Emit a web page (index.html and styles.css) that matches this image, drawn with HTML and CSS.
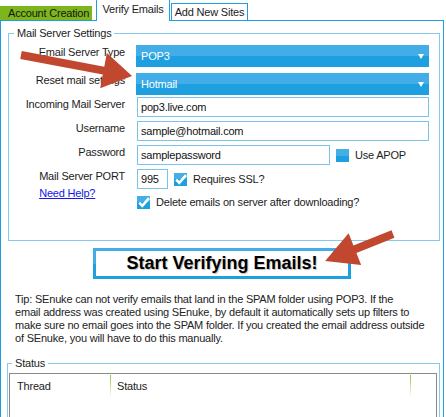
FILE: index.html
```html
<!DOCTYPE html>
<html>
<head>
<meta charset="utf-8">
<link rel="stylesheet" href="styles.css">
</head>
<body>
<div class="tabs">
  <div class="tab tab-green">Account Creation</div>
  <div class="tab tab-active">Verify Emails</div>
  <div class="tab tab-plain">Add New Sites</div>
</div>
<div class="panel">
  <fieldset class="group group-mail">
    <legend>Mail Server Settings</legend>
    <div class="form">
      <div class="lbl lbl-select">Email Server Type</div>
      <div class="select"><span>POP3</span><span class="caret"></span></div>

      <div class="lbl lbl-select">Reset mail settings</div>
      <div class="select"><span>Hotmail</span><span class="caret"></span></div>

      <div class="lbl">Incoming Mail Server</div>
      <div class="field">pop3.live.com</div>

      <div class="lbl">Username</div>
      <div class="field">sample@hotmail.com</div>

      <div class="lbl">Password</div>
      <div class="row">
        <div class="field field-pass">samplepassword</div>
        <span class="check check-off"></span>
        <span class="check-text">Use APOP</span>
      </div>

      <div class="lbl lbl-port">
        <div class="port-stack">
          <div>Mail Server PORT</div>
          <a class="help" href="#">Need Help?</a>
        </div>
      </div>
      <div class="row">
        <div class="field field-port">995</div>
        <span class="check check-on"></span>
        <span class="check-text">Requires SSL?</span>
      </div>

      <div class="row row-delete">
        <span class="check check-on"></span>
        <span class="check-text">Delete emails on server after downloading?</span>
      </div>
    </div>
  </fieldset>

  <div class="btn-wrap">
    <div class="start-btn"><div class="start-inner">Start Verifying Emails!</div></div>
  </div>

  <p class="tip">Tip: SEnuke can not verify emails that land in the SPAM folder using POP3. If the<br>email address was created using SEnuke, by default it automatically sets up filters to<br>make sure no email goes into the SPAM folder. If you created the email address outside<br>of SEnuke, you will have to do this manually.</p>

  <fieldset class="group group-status">
    <legend>Status</legend>
    <div class="listbox">
      <div class="list-head">
        <div class="col col-thread">Thread</div>
        <div class="sep"></div>
        <div class="col col-status">Status</div>
        <div class="sep"></div>
      </div>
    </div>
  </fieldset>
</div>

<svg class="arrows" width="446" height="417" viewBox="0 0 446 417">
  <path fill="#c1472f" transform="translate(21 55) rotate(10.7)" d="M0 -4 H84 V-18 L113 0 L84 18 V4 H0 Z"/>
  <path fill="#c1472f" transform="translate(393 234) rotate(158.3)" d="M0 -4 H41 V-17 L73 0 L41 17 V4 H0 Z"/>
</svg>
</body>
</html>
```

FILE: styles.css
```css
html, body {
  margin: 0;
  padding: 0;
  background: #fff;
  overflow: hidden;
}
body {
  position: relative;
  width: 446px;
  height: 417px;
  font-family: "Liberation Sans", Arial, sans-serif;
  font-size: 11px;
  letter-spacing: -0.2px;
  color: #1c1c1c;
}

/* Tabs */
.tabs {
  display: flex;
  align-items: flex-end;
  height: 20px;
}
.tab {
  box-sizing: border-box;
  white-space: nowrap;
}
.tab-green {
  width: 92px;
  height: 14px;
  line-height: 14px;
  padding-left: 8px;
  background: #7db61c;
  color: #151515;
}
.tab-active {
  position: relative;
  z-index: 1;
  width: 74px;
  height: 22px;
  margin-left: 4px;
  margin-bottom: -1px;
  border: 1px solid #1f9de0;
  border-bottom: none;
  background: #fff;
  line-height: 18px;
  text-align: center;
}
.tab-plain {
  width: 77px;
  height: 17px;
  margin-left: 1px;
  border: 1px solid #1f9de0;
  border-bottom: none;
  background: #fff;
  line-height: 16px;
  text-align: center;
}

/* Panel */
.panel {
  box-sizing: border-box;
  width: 444px;
  height: 397px;
  border: 1px solid #1f9de0;
  border-bottom: none;
  overflow: hidden;
}

.group {
  border: 1px solid #86cbed;
  padding: 0;
  min-width: 0;
}
.group legend {
  padding: 0 3px;
  line-height: 13px;
}
.group-mail {
  margin: 6px 3px 0 7px;
}
.group-mail legend {
  margin-left: 5px;
}

.form {
  display: grid;
  grid-template-columns: 116px 1fr;
  grid-template-rows: 22px 28px 22px 24px 24px 24px 20px;
  column-gap: 11px;
  padding: 5px 10px 31px 0;
}
.lbl {
  align-self: end;
  text-align: right;
  line-height: 13px;
  margin-bottom: 6px;
  white-space: nowrap;
}
.lbl-select {
  margin-bottom: 8px;
}
.lbl-port {
  grid-row: span 2;
  align-self: start;
  margin: 5px 0 0;
}
.port-stack {
  display: inline-block;
  text-align: left;
}
.help {
  display: block;
  margin-top: 4px;
  color: #1515e8;
  text-decoration: underline;
}

.select {
  align-self: end;
  height: 22px;
  display: flex;
  align-items: center;
  justify-content: space-between;
  padding: 0 5px 0 5px;
  background: linear-gradient(#42ade6 50%, #1e9fe0 50%);
  color: #fff;
}
.caret {
  width: 0;
  height: 0;
  border-left: 3.5px solid transparent;
  border-right: 3.5px solid transparent;
  border-top: 5px solid #fff;
  margin-top: 1px;
}

.field {
  box-sizing: border-box;
  align-self: end;
  height: 20px;
  margin-left: 1px;
  border: 1px solid #7cc3ea;
  padding-left: 3px;
  line-height: 18px;
  color: #111;
  background: #fff;
}
.row {
  align-self: end;
  display: flex;
  align-items: center;
}
.row .field {
  flex: none;
}
.field-pass {
  width: 193px;
}
.field-port {
  width: 31px;
}
.row-delete {
  grid-column: 2;
  height: 13px;
  margin-left: 1px;
}
.check {
  flex: none;
  width: 13px;
  height: 13px;
  margin-left: 6px;
  background: linear-gradient(#44aee6 50%, #1e9fe0 50%);
  background-repeat: no-repeat;
}
.row-delete .check {
  margin-left: 0;
}
.check-on {
  background-image:
    url("data:image/svg+xml;utf8,<svg xmlns='http://www.w3.org/2000/svg' width='13' height='13'><path d='M2.2 6.6 L5.3 9.8 L12 2.2' fill='none' stroke='white' stroke-width='2.6'/></svg>"),
    linear-gradient(#44aee6 50%, #1e9fe0 50%);
}
.check-text {
  margin-left: 6px;
  white-space: nowrap;
  line-height: 13px;
}

/* Button */
.btn-wrap {
  display: flex;
  justify-content: center;
  margin-top: 7px;
}
.start-btn {
  width: 258px;
  height: 31px;
  box-sizing: border-box;
  padding: 3px;
  background: linear-gradient(#42ade6 50%, #1e9fe0 50%);
}
.start-inner {
  height: 100%;
  background: #fff;
  display: flex;
  align-items: center;
  justify-content: center;
  font-size: 18px;
  font-weight: bold;
  letter-spacing: 0;
  color: #000;
  text-shadow: 1px 1px 1px rgba(0, 0, 0, 0.25);
}

/* Tip */
.tip {
  margin: 14px 0 0;
  padding-left: 14px;
  line-height: 13px;
  color: #222;
  white-space: nowrap;
}

/* Status */
.group-status {
  margin: 12px 3px 0 6px;
}
.group-status legend {
  margin-left: 4px;
}
.listbox {
  margin: 3px 2px 0 1px;
  height: 44px;
  border: 1px solid #8a8a8a;
  border-bottom: none;
}
.list-head {
  display: flex;
}
.col {
  line-height: 13px;
  padding-top: 6px;
  box-sizing: border-box;
}
.col-thread {
  width: 100px;
  padding-left: 7px;
}
.col-status {
  width: 299px;
  padding-left: 6px;
}
.sep {
  width: 1px;
  height: 22px;
  margin-top: 1px;
  background: linear-gradient(#8cc63f, rgba(140, 198, 63, 0));
}

/* Arrows overlay */
.arrows {
  position: absolute;
  left: 0;
  top: 0;
  pointer-events: none;
}
```
